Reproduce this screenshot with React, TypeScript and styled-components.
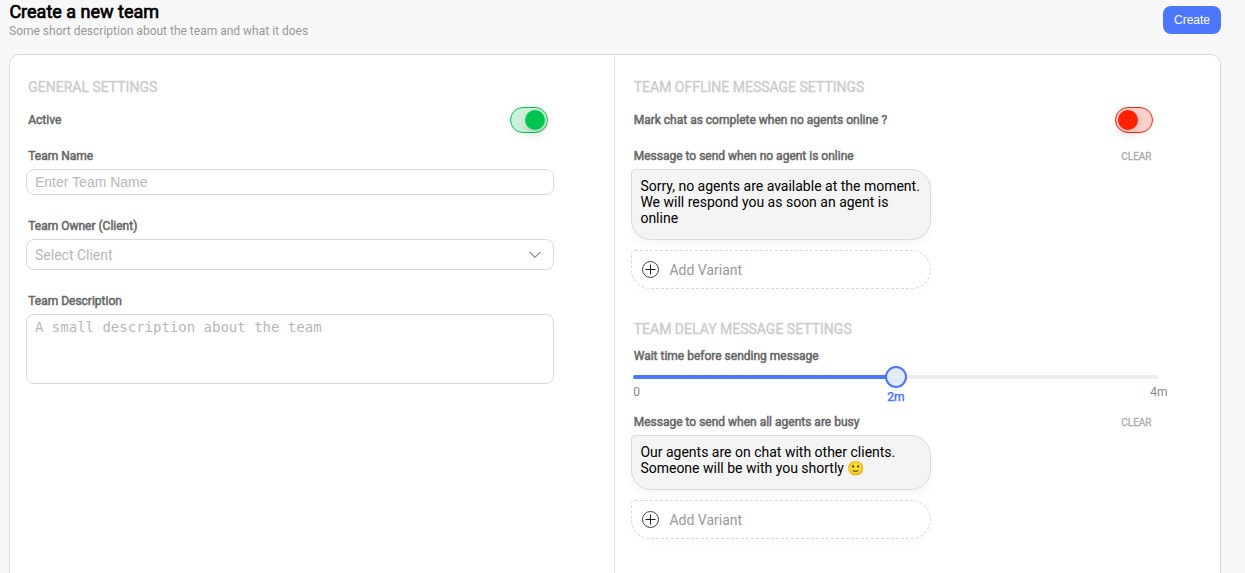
import React, { useState } from "react";
import styled, { createGlobalStyle } from "styled-components";

const GlobalStyle = createGlobalStyle`
  * { box-sizing: border-box; }
  body {
    margin: 0;
    background: #f8f8f8;
    font-family: Roboto, "Liberation Sans", sans-serif;
    overflow: hidden;
  }
`;

const Page = styled.div`
  height: 573px;
  padding: 0 24px 0 9px;
  display: flex;
  flex-direction: column;
  overflow: hidden;
`;

const Header = styled.header`
  flex: none;
  height: 54px;
  display: flex;
  justify-content: space-between;
  align-items: flex-start;
`;

const Title = styled.h1`
  margin: 0;
  padding: 1px 0 0 0.4px;
  font-size: 18px;
  line-height: 22px;
  font-weight: 400;
  color: #000;
  -webkit-text-stroke: 0.7px #000;
`;

const Subtitle = styled.p`
  margin: 0;
  font-size: 12px;
  line-height: 16px;
  color: #999;
`;

const CreateButton = styled.button`
  margin-top: 6px;
  width: 58px;
  height: 28px;
  padding: 0;
  border: 0;
  border-radius: 8px;
  background: #4d76ff;
  color: #fff;
  font: 12px "Liberation Sans", sans-serif;
`;

const Card = styled.main`
  flex: none;
  height: 540px;
  display: flex;
  border: 1px solid #d9d9d9;
  border-radius: 10px;
  background: #fff;
`;

const Column = styled.section<{ $width?: number }>`
  ${(p) =>
    p.$width
      ? `width: ${p.$width}px; border-right: 1px solid #e4e4e4; padding: 22px 60px 0 16px;`
      : "flex: 1; padding: 22px 60px 0 16.5px;"}
`;

const Heading = styled.h2<{ $top?: number; $gap?: number }>`
  margin: ${(p) => p.$top ?? 0}px 0 ${(p) => p.$gap ?? 10}px 2.2px;
  font-size: 14px;
  line-height: 20px;
  font-weight: 400;
  color: #ccc;
  -webkit-text-stroke: 0.4px #ccc;
`;

const Row = styled.div<{ $height?: number; $top?: number; $end?: number }>`
  height: ${(p) => p.$height ?? 14}px;
  margin-top: ${(p) => p.$top ?? 0}px;
  padding: 0 ${(p) => p.$end ?? 6}px 0 2.2px;
  display: flex;
  align-items: center;
  justify-content: space-between;
`;

const Label = styled.span`
  font-size: 12px;
  line-height: 14px;
  color: #666;
  -webkit-text-stroke: 0.5px #666;
`;

const Clear = styled.button`
  border: 0;
  padding: 2px 0 0;
  background: none;
  font: 10px/14px Roboto, sans-serif;
  color: #aaa;
  -webkit-text-stroke: 0.3px #aaa;
`;

const Switch = styled.button<{ $on: boolean }>`
  width: 38px;
  height: 26px;
  padding: 0 2px;
  display: flex;
  align-items: center;
  justify-content: ${(p) => (p.$on ? "flex-end" : "flex-start")};
  border: 1px solid ${(p) => (p.$on ? "#00c44f" : "#ff2200")};
  border-radius: 13px;
  background: ${(p) => (p.$on ? "#ccf2da" : "#ffd0cc")};
  box-shadow: 0 4px 10px rgba(0, 0, 0, 0.03);
`;

const Knob = styled.span<{ $on: boolean }>`
  width: 20px;
  height: 20px;
  border-radius: 50%;
  background: ${(p) => (p.$on ? "#00c44f" : "#ff2200")};
  box-shadow: 0 4px 10px rgba(0, 0, 0, 0.15);
`;

const fieldBox = `
  display: flex;
  width: 528px;
  margin: 6px 0 0;
  border: 1px solid #d9d9d9;
  border-radius: 8px;
  background: #fff;
  outline: 0;
  &::placeholder { color: #b8b8b8; opacity: 1; }
`;

const TextInput = styled.input`
  ${fieldBox}
  height: 26px;
  padding: 0 8px;
  font: 14px "Liberation Sans", sans-serif;
`;

const SelectBox = styled.div`
  ${fieldBox}
  height: 31px;
  padding: 1px 12px 0 8px;
  align-items: center;
  justify-content: space-between;
  font-size: 14px;
  color: #b8b8b8;
`;

const TextArea = styled.textarea`
  ${fieldBox}
  height: 70px;
  padding: 4px 8px;
  resize: none;
  font: 14px/17px "DejaVu Sans Mono", monospace;
`;

const Bubble = styled.div<{ $height: number }>`
  width: 300px;
  height: ${(p) => p.$height}px;
  margin: 6px 0 10px -0.5px;
  padding: 8px 8px 0 8.4px;
  border: 1px solid #d9d9d9;
  border-radius: 4px 20px 20px 20px;
  background: #f4f4f4;
  box-shadow: 0 4px 10px rgba(0, 0, 0, 0.04);
  font-size: 14px;
  line-height: 16px;
  color: #000;
  white-space: pre-line;
`;

const AddVariant = styled.button`
  width: 300px;
  height: 39px;
  margin-left: -0.5px;
  padding: 0 10px;
  display: flex;
  align-items: center;
  gap: 10.4px;
  border: 1px dashed #d9d9d9;
  border-radius: 4px 20px 20px 20px;
  background: #fff;
  font: 14px Roboto, sans-serif;
  color: #999;
  box-shadow: 0 4px 10px rgba(0, 0, 0, 0.02);
`;

const Slider = styled.div`
  position: relative;
  width: 526px;
  height: 4px;
  margin: 12px 0 36px 1.5px;
  border-radius: 2px;
  background: #ececec;
`;

const SliderFill = styled.div`
  height: 4px;
  border-radius: 2px;
  background: #4d76ff;
`;

const SliderThumb = styled.div`
  position: absolute;
  top: 2px;
  width: 22px;
  height: 22px;
  border: 2px solid #4d76ff;
  border-radius: 50%;
  background: #e1ecff;
  transform: translate(-50%, -50%);
`;

const SliderMark = styled.span<{ $current?: boolean }>`
  position: absolute;
  top: ${(p) => (p.$current ? 15 : 10)}px;
  transform: translateX(-50%);
  font-size: 12px;
  line-height: 14px;
  color: ${(p) => (p.$current ? "#4d76ff" : "#888")};
  -webkit-text-stroke: ${(p) => (p.$current ? "0.45px #4d76ff" : "0")};
`;

const Chevron = () => (
  <svg width="12" height="8" viewBox="0 0 12 8" fill="none" stroke="#333" strokeWidth="0.9">
    <path d="M0.8 1.2 L6 6.4 L11.2 1.2" />
  </svg>
);

const PlusCircle = () => (
  <svg width="17" height="17" viewBox="0 0 17 17" fill="none" stroke="#222">
    <circle cx="8.5" cy="8.5" r="8" strokeWidth="0.85" />
    <path d="M8.5 3.5v10M3.5 8.5h10" strokeWidth="1" />
  </svg>
);

function Toggle({ initial, label }: { initial: boolean; label: string }) {
  const [on, setOn] = useState(initial);
  return (
    <Switch $on={on} role="switch" aria-checked={on} aria-label={label} onClick={() => setOn(!on)}>
      <Knob $on={on} />
    </Switch>
  );
}

function MessageEditor({ label, text, height, top }: { label: string; text: string; height: number; top?: number }) {
  return (
    <>
      <Row $top={top} $end={8.5}>
        <Label>{label}</Label>
        <Clear>CLEAR</Clear>
      </Row>
      <Bubble $height={height}>{text}</Bubble>
      <AddVariant>
        <PlusCircle />
        Add Variant
      </AddVariant>
    </>
  );
}

export default function App() {
  const wait = 50;
  return (
    <>
      <GlobalStyle />
      <Page>
        <Header>
          <div>
            <Title>Create a new team</Title>
            <Subtitle>Some short description about the team and what it does</Subtitle>
          </div>
          <CreateButton>Create</CreateButton>
        </Header>
        <Card>
          <Column $width={605}>
            <Heading>GENERAL SETTINGS</Heading>
            <Row $height={26}>
              <Label>Active</Label>
              <Toggle initial label="Active" />
            </Row>
            <Row $top={16}>
              <Label>Team Name</Label>
            </Row>
            <TextInput placeholder="Enter Team Name" />
            <Row $top={24}>
              <Label>Team Owner (Client)</Label>
            </Row>
            <SelectBox>
              Select Client
              <Chevron />
            </SelectBox>
            <Row $top={24}>
              <Label>Team Description</Label>
            </Row>
            <TextArea placeholder="A small description about the team" />
          </Column>
          <Column>
            <Heading>TEAM OFFLINE MESSAGE SETTINGS</Heading>
            <Row $height={26} $end={7}>
              <Label>Mark chat as complete when no agents online ?</Label>
              <Toggle initial={false} label="Mark chat as complete" />
            </Row>
            <MessageEditor
              top={16}
              height={71}
              label="Message to send when no agent is online"
              text={"Sorry, no agents are available at the moment.\nWe will respond you as soon an agent is\nonline"}
            />
            <Heading $top={30}>TEAM DELAY MESSAGE SETTINGS</Heading>
            <Row>
              <Label>Wait time before sending message</Label>
            </Row>
            <Slider>
              <SliderFill style={{ width: `${wait}%` }} />
              <SliderThumb style={{ left: `${wait}%` }} />
              <SliderMark style={{ left: 3.7 }}>0</SliderMark>
              <SliderMark $current style={{ left: `${wait}%` }}>2m</SliderMark>
              <SliderMark style={{ left: "100%" }}>4m</SliderMark>
            </Slider>
            <MessageEditor
              height={55}
              label="Message to send when all agents are busy"
              text={"Our agents are on chat with other clients.\nSomeone will be with you shortly 🙂"}
            />
          </Column>
        </Card>
      </Page>
    </>
  );
}
